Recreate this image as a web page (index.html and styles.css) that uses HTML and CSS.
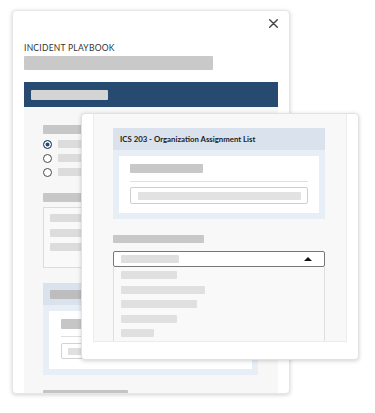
FILE: index.html
```html
<!DOCTYPE html>
<html lang="en">
<head>
<meta charset="utf-8">
<title>Incident Playbook</title>
<link rel="stylesheet" href="styles.css">
</head>
<body>
<div class="stage">
  <section class="back-modal">
    <div class="close-row">
      <svg class="close" width="9" height="9" viewBox="0 0 9 9"><path d="M0.7 0.7L8.3 8.3M8.3 0.7L0.7 8.3" stroke="#444" stroke-width="1.4" stroke-linecap="round"/></svg>
    </div>
    <div class="title">INCIDENT PLAYBOOK</div>
    <div class="sk sk-title"></div>
    <div class="section-head"><div class="sk sk-head"></div></div>
    <div class="section-body">
      <div class="sk sk-label"></div>
      <div class="radios">
        <div class="radio-row"><span class="radio checked"></span><span class="sk sk-line"></span></div>
        <div class="radio-row"><span class="radio"></span><span class="sk sk-line"></span></div>
        <div class="radio-row"><span class="radio"></span><span class="sk sk-line"></span></div>
      </div>
      <div class="sk sk-label sk-label-2"></div>
      <div class="textbox">
        <div class="sk sk-line sk-tb"></div>
        <div class="sk sk-line sk-tb"></div>
        <div class="sk sk-line sk-tb"></div>
      </div>
      <div class="card back-card">
        <div class="card-head"><div class="sk sk-cardhead"></div></div>
        <div class="card-body">
          <div class="card-inner">
            <div class="sk sk-inner-label"></div>
            <div class="rule"></div>
            <div class="input"><div class="sk sk-input"></div></div>
          </div>
        </div>
      </div>
      <div class="sk sk-bottom"></div>
    </div>
  </section>

  <section class="front-modal">
    <div class="front-panel">
      <div class="card front-card">
        <div class="card-head front-head">ICS 203 - Organization Assignment List</div>
        <div class="card-body">
          <div class="card-inner front-inner">
            <div class="sk sk-f-label"></div>
            <div class="rule front-rule"></div>
            <div class="input front-input"><div class="sk sk-f-input"></div></div>
          </div>
        </div>
      </div>
      <div class="sk sk-f-field"></div>
      <div class="select">
        <div class="sk sk-select"></div>
        <span class="caret"></span>
      </div>
      <div class="options">
        <div class="sk sk-opt" style="width:56px"></div>
        <div class="sk sk-opt" style="width:84px"></div>
        <div class="sk sk-opt" style="width:76px"></div>
        <div class="sk sk-opt" style="width:56px"></div>
        <div class="sk sk-opt" style="width:33px"></div>
      </div>
    </div>
  </section>
</div>
</body>
</html>
```

FILE: styles.css
```css
* { box-sizing: border-box; }
html, body { margin: 0; padding: 0; background: #fff; }
body { font-family: Lato, "Open Sans", sans-serif; color: #333; }

.stage { position: relative; width: 375px; height: 413px; overflow: hidden; }

.sk { display: block; border-radius: 1px; flex: none; }

/* back modal */
.back-modal {
  margin: 10px 0 0 12px;
  width: 278px;
  height: 384px;
  background: #fff;
  border: 1px solid #e6e6e6;
  border-radius: 4px;
  box-shadow: 0 1px 4px rgba(0,0,0,0.18);
  padding: 8px 11px 0 11px;
  overflow: hidden;
  display: flex;
  flex-direction: column;
}
.back-modal > * { flex: none; }
.close-row { display: flex; justify-content: flex-end; height: 9px; }
.close { display: block; }
.title {
  margin-top: 15px;
  font-size: 8.5px;
  line-height: 11px;
  letter-spacing: 0.25px;
  color: #333;
}
.sk-title { margin-top: 2px; width: 189px; height: 14px; background: #c9c9c9; }
.section-head {
  margin-top: 12px;
  height: 25px;
  background: #274a70;
  display: flex;
  align-items: center;
  padding-left: 7px;
}
.sk-head { width: 77px; height: 10px; background: #d4d4d4; }
.section-body {
  background: #f7f7f7;
  padding: 18px 0 30px 19px;
  display: flex;
  flex-direction: column;
}
.section-body > * { flex: none; }
.sk-label { width: 90px; height: 9px; background: #c7c7c7; }
.radios { margin-top: 3px; display: flex; flex-direction: column; }
.radio-row { height: 14px; display: flex; align-items: center; gap: 6px; flex: none; }
.radio {
  width: 9px; height: 9px;
  border-radius: 50%;
  border: 1px solid #4a4a4a;
  background: #fff;
  flex: none;
}
.radio.checked { border-color: #27476b; box-shadow: inset 0 0 0 1.5px #fff; background: #27476b; }
.sk-line { width: 70px; height: 8px; background: #dcdcdc; }
.sk-label-2 { margin-top: 14px; }
.textbox {
  margin-top: 5px;
  width: 200px;
  height: 61px;
  border: 1px solid #dcdcdc;
  background: #f9f9f9;
  padding: 6px 0 0 6px;
  display: flex;
  flex-direction: column;
  gap: 6.5px;
}
.sk-tb { width: 120px; }

.card { display: flex; flex-direction: column; }
.card > * { flex: none; }
.card-head { height: 22px; background: #d9e2ed; display: flex; align-items: center; padding-left: 7px; }
.card-body { background: #e8eef5; padding: 6px; }
.card-inner { background: #fff; display: flex; flex-direction: column; }

.back-card { margin-top: 15px; width: 215px; }
.sk-cardhead { width: 120px; height: 9px; background: #bdbdbd; }
.back-card .card-inner { height: 58px; padding: 8px 0 0 12px; }
.sk-inner-label { width: 100px; height: 10px; background: #c6c6c6; }
.rule { margin-top: 7px; width: 180px; height: 1px; background: #dedede; flex: none; }
.input {
  margin-top: 6px;
  width: 180px;
  height: 16px;
  border: 1px solid #d2d2d2;
  border-radius: 2px;
  padding: 4px 0 0 6px;
  flex: none;
}
.sk-input { width: 120px; height: 7px; background: #e0e0e0; }
.sk-bottom { margin-top: 15px; width: 85px; height: 10px; background: #c4c4c4; }

/* front modal (overlay) */
.front-modal {
  position: absolute;
  left: 81px;
  top: 113px;
  width: 278px;
  height: 247px;
  background: #fff;
  border: 1px solid #e2e2e2;
  border-radius: 4px;
  box-shadow: 0 1px 4px rgba(0,0,0,0.18);
  padding: 0 11px;
}
.front-panel {
  height: 228px;
  background: #f8f8f8;
  border: 1px solid #ececec;
  border-top: none;
  padding: 14px 0 0 19px;
  overflow: hidden;
  display: flex;
  flex-direction: column;
}
.front-panel > * { flex: none; }
.front-card { width: 212px; }
.front-head {
  font-size: 7.8px;
  font-weight: 700;
  color: #222;
  padding-left: 7px;
  white-space: nowrap;
}
.front-inner { padding: 8px 0 9px 11px; }
.sk-f-label { width: 73px; height: 9px; background: #c8c8c8; }
.front-rule { margin-top: 8px; width: 178px; background: #e0e0e0; }
.front-input { margin-top: 5px; width: 178px; height: 17px; border-color: #cfcfcf; padding: 4px 0 0 7px; }
.sk-f-input { width: 163px; height: 8px; background: #e2e2e2; }

.sk-f-field { margin-top: 16px; width: 91px; height: 8px; background: #c8c8c8; }
.select {
  margin-top: 8px;
  width: 212px;
  height: 16px;
  border: 1px solid #777;
  border-radius: 2px;
  background: #fff;
  display: flex;
  align-items: center;
  justify-content: space-between;
  padding: 0 12px 0 7px;
}
.sk-select { width: 58px; height: 8px; background: #dfdfdf; }
.caret {
  width: 0; height: 0;
  border-left: 4px solid transparent;
  border-right: 4px solid transparent;
  border-bottom: 4px solid #111;
}
.options {
  width: 212px;
  height: 120px;
  border: 1px solid #dedede;
  border-top: none;
  background: #f9f9f9;
  padding: 4px 0 0 7px;
  display: flex;
  flex-direction: column;
  gap: 6.5px;
}
.sk-opt { height: 8px; background: #e0e0e0; flex: none; }
```
